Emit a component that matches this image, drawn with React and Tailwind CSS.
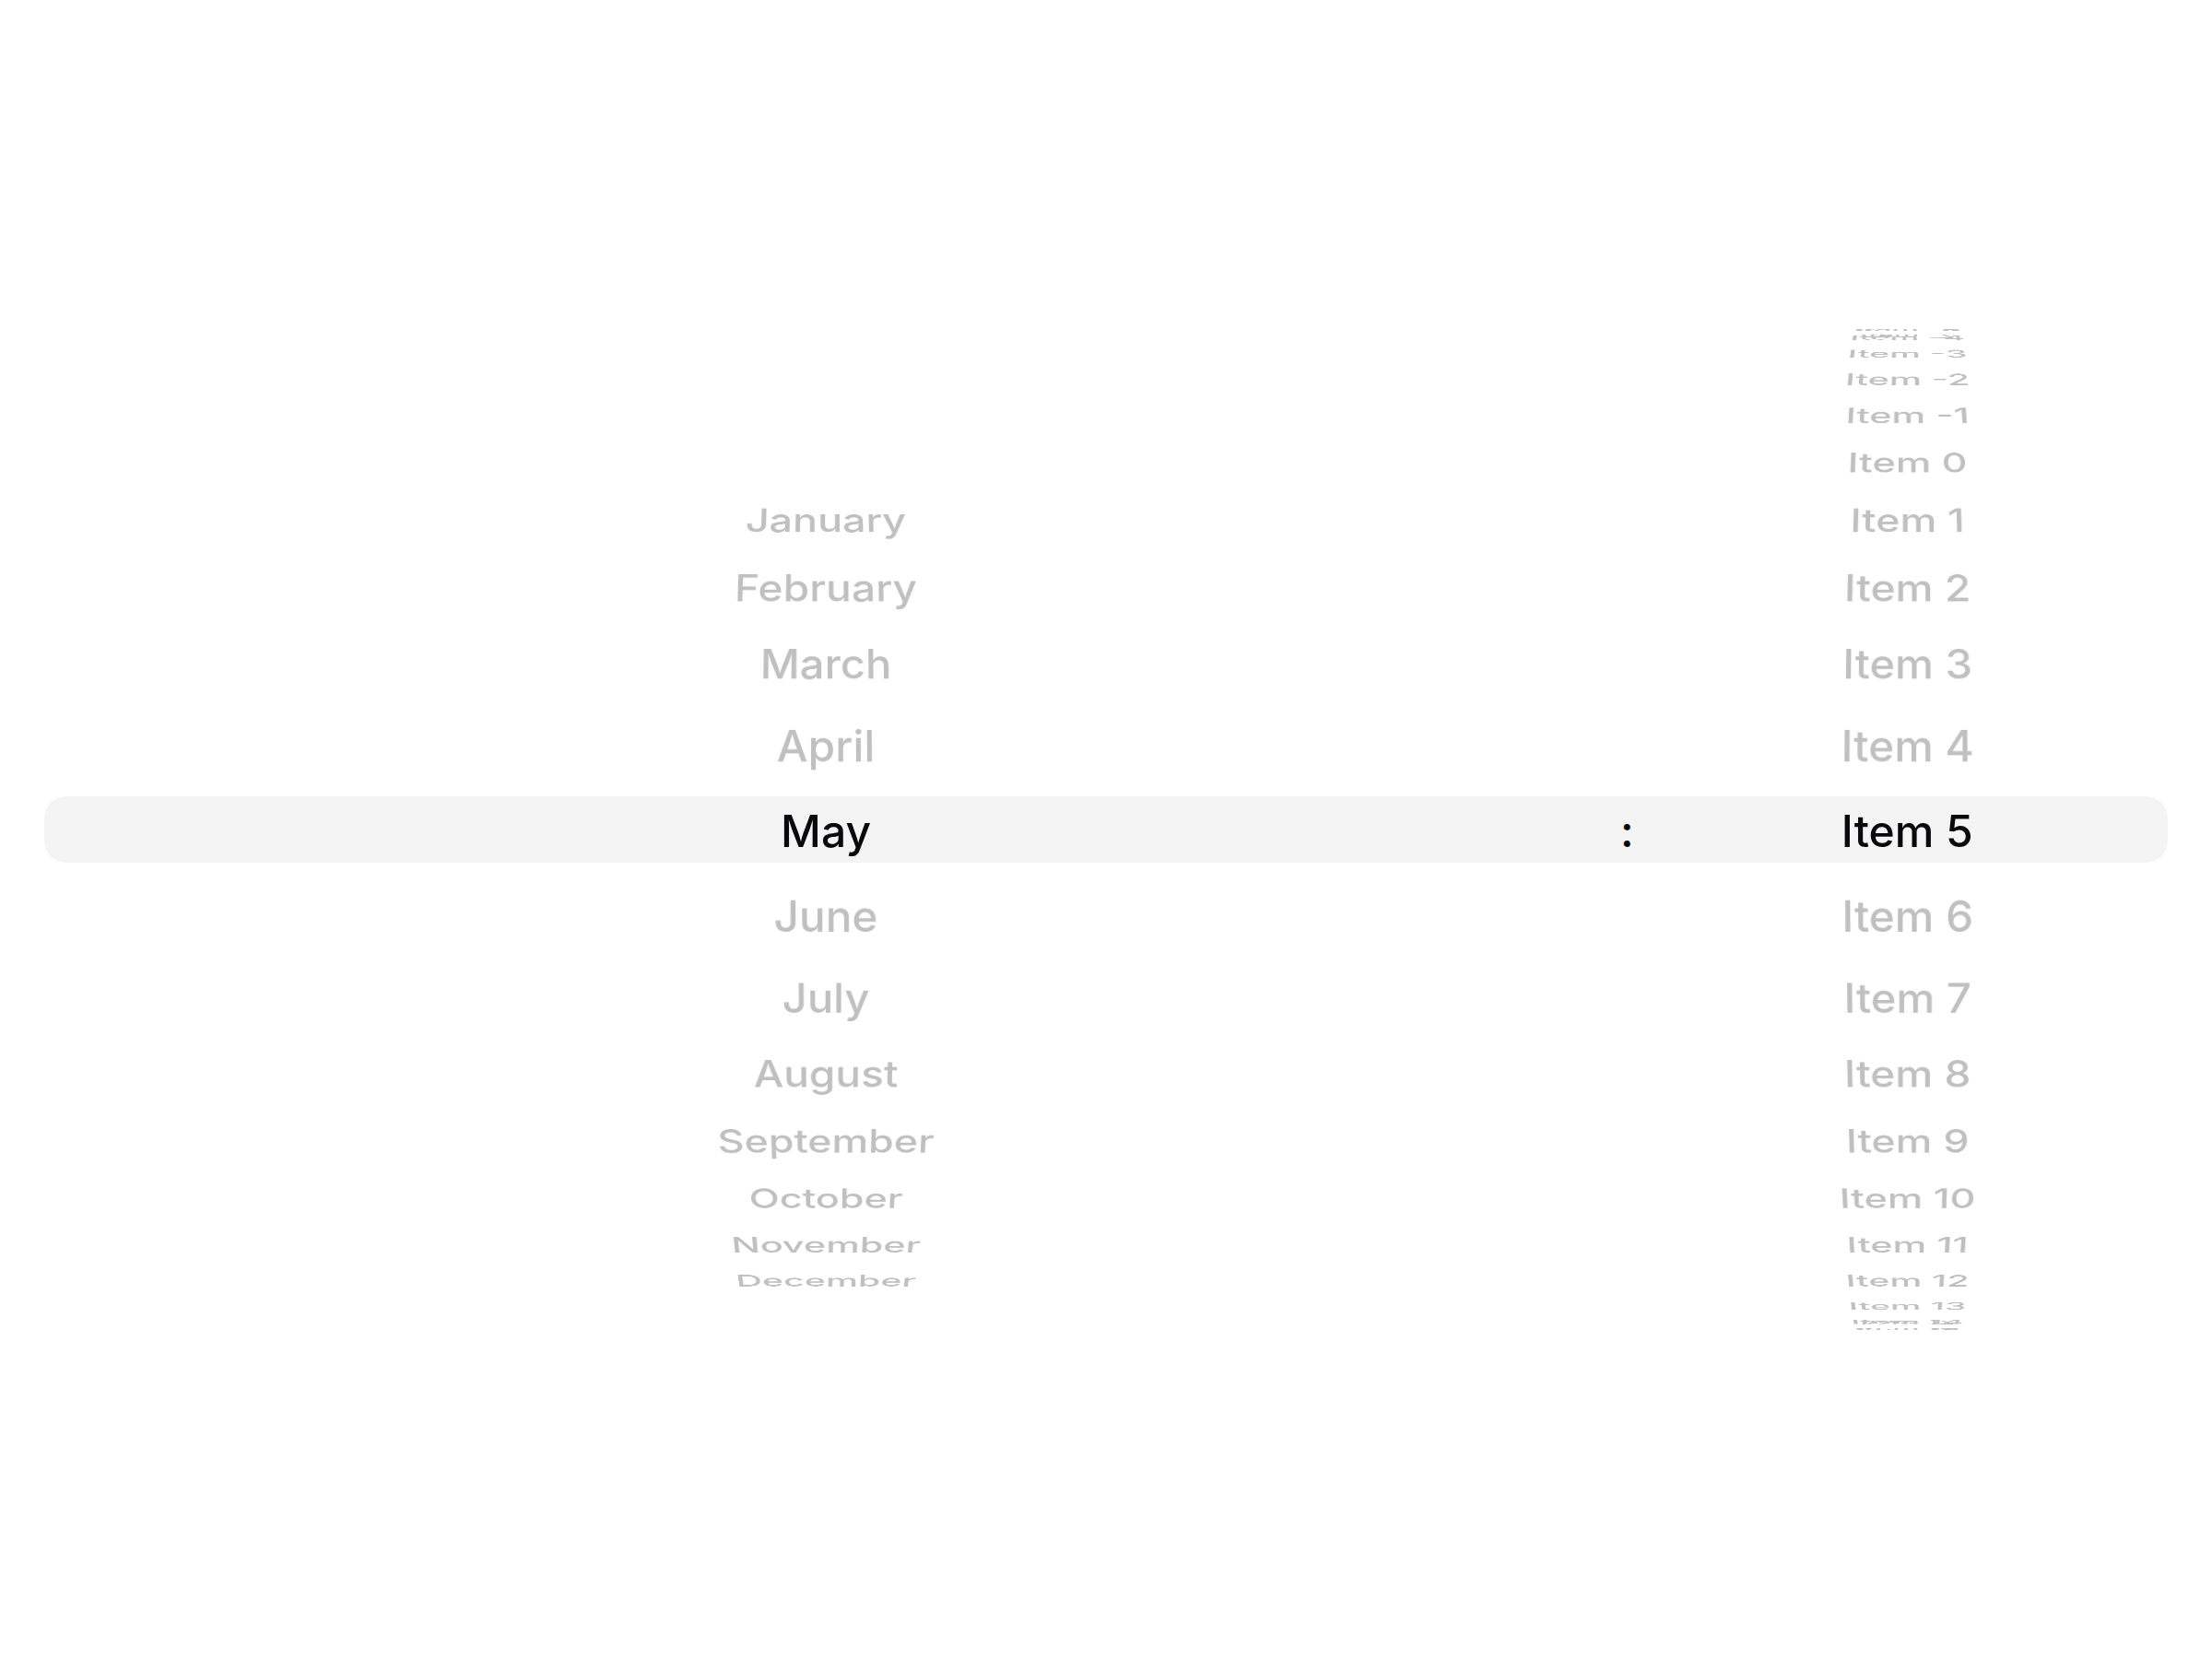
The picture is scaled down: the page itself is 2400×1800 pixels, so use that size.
const MONTHS = [
  "January", "February", "March", "April", "May", "June",
  "July", "August", "September", "October", "November", "December",
];

const STEP = 6;
const RADIUS = 888;
const REACH = 12;

function Wheel({ label, options, selected, className, highlightClassName }) {
  return (
    <div
      role="listbox"
      aria-label={label}
      className={`relative flex h-[1088px] min-w-0 items-center overflow-hidden perspective-[1060px] ${className}`}
    >
      <ul
        className="relative h-18 w-full transform-3d"
        style={{ transform: `translateZ(${-RADIUS}px)` }}
      >
        {options.map((text, index) => {
          const distance = index - selected;
          if (distance === 0 || Math.abs(distance) > REACH) return null;
          return (
            <li
              key={text}
              role="option"
              aria-selected={false}
              className="absolute inset-0 flex items-center justify-center pt-1 text-[#c0c0c0]"
              style={{ transform: `rotateX(${-distance * STEP}deg) translateZ(${RADIUS}px)` }}
            >
              {text}
            </li>
          );
        })}
      </ul>
      <div
        role="option"
        aria-selected={true}
        className={`absolute inset-x-0 flex h-18 items-center justify-center bg-[#f4f4f4] pt-1 text-zinc-950 ${highlightClassName}`}
      >
        {options[selected]}
      </div>
    </div>
  );
}

export default function App() {
  const items = Array.from({ length: 40 }, (_, i) => `Item ${i - 14}`);
  return (
    <main className="flex min-h-screen items-center bg-white px-12 font-['Inter',sans-serif] text-5xl font-medium">
      <div className="flex w-full items-center">
        <Wheel
          label="Month"
          options={MONTHS}
          selected={4}
          className="flex-3"
          highlightClassName="rounded-l-3xl"
        />
        <div className="flex h-18 items-center bg-[#f4f4f4] px-3.5 pt-1 text-zinc-950">:</div>
        <Wheel
          label="Item"
          options={items}
          selected={19}
          className="flex-1"
          highlightClassName="rounded-r-3xl"
        />
      </div>
    </main>
  );
}
